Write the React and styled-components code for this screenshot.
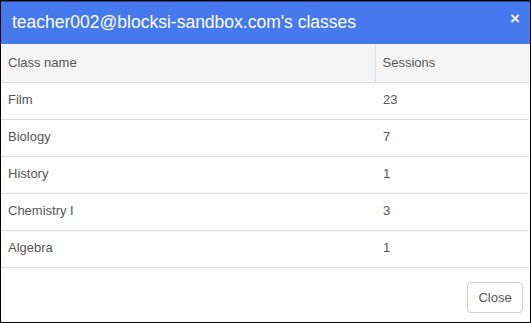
import React from "react";
import styled, { createGlobalStyle } from "styled-components";

const Global = createGlobalStyle`
  html, body { margin: 0; padding: 0; background: #fff; }
  body { font-family: "Liberation Sans", Arial, sans-serif; }
  * { box-sizing: border-box; }
`;

const Dialog = styled.div`
  width: 531px;
  height: 323px;
  border: 1px solid #000;
  display: flex;
  flex-direction: column;
  background: #fff;
`;

const Header = styled.div`
  height: 43px;
  background: #4779ee;
  border-top: 1px solid #2a3f7a;
  display: flex;
  align-items: center;
  justify-content: space-between;
  padding: 0 10px 0 11px;
  color: #fff;
`;

const Title = styled.h4`
  margin: 0;
  font-size: 17.5px;
  font-weight: normal;
  margin-top: -2px;
`;

const CloseX = styled.span`
  font-size: 17px;
  font-weight: bold;
  align-self: flex-start;
  margin-top: 8px;
  line-height: 1;
  opacity: 0.9;
`;

const Table = styled.table`
  width: 100%;
  border-collapse: collapse;
  font-size: 13px;
  color: #555;
`;

const Th = styled.th`
  text-align: left;
  font-weight: normal;
  height: 38px;
  padding: 0 7px 1px;
  background: #f5f5f5;
  border-bottom: 1px solid #ddd;
  width: ${(p) => p.w || "auto"};
  border-left: ${(p) => (p.divider ? "1px solid #ddd" : "none")};
`;

const Td = styled.td`
  height: 37px;
  padding: 0 7px 2px;
  border-bottom: 1px solid #ddd;
  ${(p) => p.second && "padding-left: 8px;"}
`;

const Footer = styled.div`
  flex: 1;
  display: flex;
  justify-content: flex-end;
  align-items: flex-start;
  padding: 14px 7px 0 0;
`;

const Button = styled.button`
  font-family: "Liberation Sans", Arial, sans-serif;
  font-size: 13px;
  color: #555;
  background: #fff;
  border: 1px solid #ccc;
  border-radius: 4px;
  height: 31px;
  width: 56px;
  padding: 0;
`;

const rows = [
  ["Film", 23],
  ["Biology", 7],
  ["History", 1],
  ["Chemistry I", 3],
  ["Algebra", 1],
];

export default function App() {
  return (
    <>
      <Global />
      <Dialog>
        <Header>
          <Title>teacher002@blocksi-sandbox.com's classes</Title>
          <CloseX>×</CloseX>
        </Header>
        <Table>
          <thead>
            <tr>
              <Th w="374px">Class name</Th>
              <Th divider>Sessions</Th>
            </tr>
          </thead>
          <tbody>
            {rows.map(([n, s]) => (
              <tr key={n}>
                <Td>{n}</Td>
                <Td second>{s}</Td>
              </tr>
            ))}
          </tbody>
        </Table>
        <Footer>
          <Button>Close</Button>
        </Footer>
      </Dialog>
    </>
  );
}
